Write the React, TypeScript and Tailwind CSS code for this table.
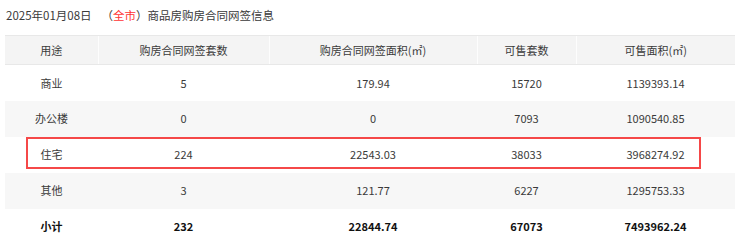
const rows = [
  { use: '商业', deals: '5', area: '179.94', sale: '15720', saleArea: '1139393.14' },
  { use: '办公楼', deals: '0', area: '0', sale: '7093', saleArea: '1090540.85' },
  { use: '住宅', deals: '224', area: '22543.03', sale: '38033', saleArea: '3968274.92' },
  { use: '其他', deals: '3', area: '121.77', sale: '6227', saleArea: '1295753.33' },
]

const total = { use: '小计', deals: '232', area: '22844.74', sale: '67073', saleArea: '7493962.24' }

const headers = ['用途', '购房合同网签套数', '购房合同网签面积(㎡)', '可售套数', '可售面积(㎡)']

export default function App() {
  return (
    <div className="w-[740px] h-[240px] overflow-hidden bg-white px-[5px] font-['Noto_Sans_CJK_SC',sans-serif] text-[#3a3a3a]">
      {/* Title */}
      <div className="h-[35px] pt-[5px] pl-[1px] text-[11.5px] leading-[20px] flex items-start">
        <span>2025年01月08日</span>
        <span className="ml-[10px]">（<span className="text-[#ff3333]">全市</span>）商品房购房合同网签信息</span>
      </div>

      {/* Table */}
      <div className="relative w-[730px]">
        <table className="w-full table-fixed border-collapse text-[11px] text-center">
          <colgroup>
            <col className="w-[93px]" />
            <col className="w-[171px]" />
            <col className="w-[208px]" />
            <col className="w-[99px]" />
            <col />
          </colgroup>
          <thead>
            <tr className="h-[29px] bg-[#f4f4f4]">
              {headers.map((h, i) => (
                <th
                  key={h}
                  className={`font-normal border-t border-b border-[#e8e8e8] ${i > 0 ? 'border-l border-l-[#fdfdfd]' : ''}`}
                >
                  {h}
                </th>
              ))}
            </tr>
          </thead>
          <tbody>
            {rows.map((r, i) => (
              <tr key={r.use} className={`h-[36px] ${i % 2 === 1 ? 'bg-[#f7f7f7]' : 'bg-white'}`}>
                <td>{r.use}</td>
                <td>{r.deals}</td>
                <td>{r.area}</td>
                <td>{r.sale}</td>
                <td>{r.saleArea}</td>
              </tr>
            ))}
            <tr className="h-[36px] font-bold text-[#111]">
              <td>{total.use}</td>
              <td>{total.deals}</td>
              <td>{total.area}</td>
              <td>{total.sale}</td>
              <td>{total.saleArea}</td>
            </tr>
          </tbody>
        </table>

        {/* highlight box over 住宅 row */}
        <div className="absolute left-[21px] top-[102px] w-[675px] h-[32px] border-2 border-[#f54848] pointer-events-none" />
      </div>
    </div>
  )
}
